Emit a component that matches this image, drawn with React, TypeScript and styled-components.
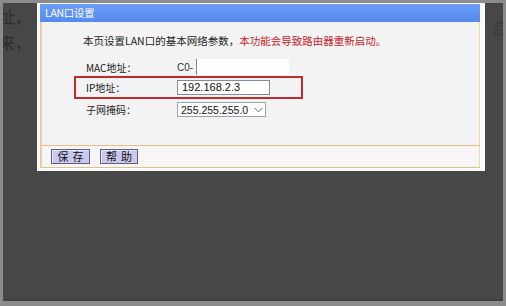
import React from 'react';
import styled, {createGlobalStyle} from 'styled-components';

const GlobalStyle = createGlobalStyle`
  html, body {
    margin: 0;
    padding: 0;
    background: #474747;
  }
  * {
    box-sizing: border-box;
  }
`;

const Frame = styled.div`
  width: 506px;
  height: 306px;
  border: 3px solid #8b8b8b;
  border-bottom-width: 5px;
  background: #474747;
  box-shadow: inset 0 -2px 0 #3e3e3e;
  font-family: "Noto Sans CJK SC", "Liberation Sans", sans-serif;
`;

const Page = styled.div`
  position: relative;
  height: 100%;
  overflow: hidden;
`;

const Backdrop = styled.div`
  display: flex;
  justify-content: space-between;
  font-size: 16px;
  line-height: 26px;
`;

const BackdropColumn = styled.div<{$offset: number; $shift: number}>`
  padding-top: ${p => p.$offset}px;
  margin-left: ${p => p.$shift}px;
  margin-right: ${p => -p.$shift}px;
  color: ${p => (p.$shift > 0 ? '#3b3b3b' : '#2c2c2c')};
`;

const Dialog = styled.div`
  position: absolute;
  left: 34px;
  top: 0;
  width: 448px;
  background: #fbfbfb;
  padding: 1px 5px 3px 3px;
`;

const TitleBar = styled.div`
  height: 18px;
  background: linear-gradient(#6b9cf6, #5689ee);
  color: #fff;
  font-size: 10.5px;
  line-height: 18px;
  padding-left: 5px;
  letter-spacing: -0.3px;
`;

const Panel = styled.div`
  background: #f3f3f3;
  border-left: 2px solid #e8cd98;
  border-right: 1px solid #efd9b0;
  border-bottom: 1px solid #e2bf82;
  padding: 11px 0 0 41px;
  box-sizing: content-box;
  height: 112px;
`;

const Intro = styled.div`
  font-size: 10.5px;
  line-height: 16px;
  color: #1e1e1e;
  white-space: nowrap;
`;

const Warning = styled.span`
  color: #c8232a;
`;

const Form = styled.div`
  display: flex;
  flex-direction: column;
  margin: 9px 0 0 -9px;
  width: 229px;
`;

const Row = styled.div<{$highlight?: boolean; $height: number}>`
  display: flex;
  align-items: center;
  height: ${p => p.$height}px;
  padding-left: 10px;
  border: 2px solid ${p => (p.$highlight ? '#c12a2e' : 'transparent')};
`;

const Label = styled.div`
  width: 91px;
  font-size: 10px;
  color: #222;
  white-space: nowrap;
`;

const Value = styled.span`
  font-size: 10px;
  color: #333;
  font-family: "Liberation Sans", sans-serif;
`;

const Redacted = styled.span`
  display: inline-block;
  width: 93px;
  height: 16px;
  margin-left: 3px;
  background: #fff;
  border-left: 1px solid #888;
`;

const TextInput = styled.div`
  width: 93px;
  height: 15px;
  border: 1px solid #7d8ea0;
  background: #fff;
  font-family: "Liberation Sans", sans-serif;
  font-size: 11px;
  line-height: 13px;
  padding-left: 4px;
  color: #111;
`;

const Select = styled.div`
  display: flex;
  align-items: center;
  justify-content: space-between;
  width: 89px;
  height: 15px;
  border: 1px solid #9aa3b0;
  background: #fff;
  font-family: "Liberation Sans", sans-serif;
  font-size: 10.5px;
  padding: 0 2px 0 3px;
  color: #111;
`;

const Footer = styled.div`
  display: flex;
  gap: 10px;
  height: 22px;
  padding: 3px 0 0 9px;
  background: #f6f6f6;
  border-left: 2px solid #e8cd98;
  border-right: 1px solid #efd9b0;
  border-bottom: 1px solid #e2bf82;
`;

const Button = styled.div<{$width: number}>`
  width: ${p => p.$width}px;
  height: 15px;
  border: 1px solid #5f5f7a;
  background: #c9c9ee;
  box-shadow: inset 1px 1px 0 #e4e4fb;
  font-size: 11px;
  line-height: 13px;
  text-align: center;
  letter-spacing: 4px;
  text-indent: 4px;
  color: #111;
`;

const Chevron = () => (
  <svg width="9" height="6" viewBox="0 0 9 6">
    <path d="M0.5 0.8 L4.5 4.8 L8.5 0.8" stroke="#666" strokeWidth="1" fill="none"/>
  </svg>
);

export default function App() {
  return <>
    <GlobalStyle/>
    <Frame>
      <Page>
        <Backdrop>
          <BackdropColumn $offset={-1} $shift={-4}>
            <div>址，</div>
            <div>来，</div>
          </BackdropColumn>
          <BackdropColumn $offset={11} $shift={6}>
            <div>启</div>
          </BackdropColumn>
        </Backdrop>
        <Dialog>
          <TitleBar>LAN口设置</TitleBar>
          <Panel>
            <Intro>本页设置LAN口的基本网络参数，<Warning>本功能会导致路由器重新启动。</Warning></Intro>
            <Form>
              <Row $height={18}>
                <Label>MAC地址：</Label>
                <Value>C0-</Value>
                <Redacted/>
              </Row>
              <Row $highlight $height={23}>
                <Label>IP地址：</Label>
                <TextInput>192.168.2.3</TextInput>
              </Row>
              <Row $height={21}>
                <Label>子网掩码：</Label>
                <Select>
                  <span>255.255.255.0</span>
                  <Chevron/>
                </Select>
              </Row>
            </Form>
          </Panel>
          <Footer>
            <Button $width={39}>保存</Button>
            <Button $width={38}>帮助</Button>
          </Footer>
        </Dialog>
      </Page>
    </Frame>
  </>;
}
